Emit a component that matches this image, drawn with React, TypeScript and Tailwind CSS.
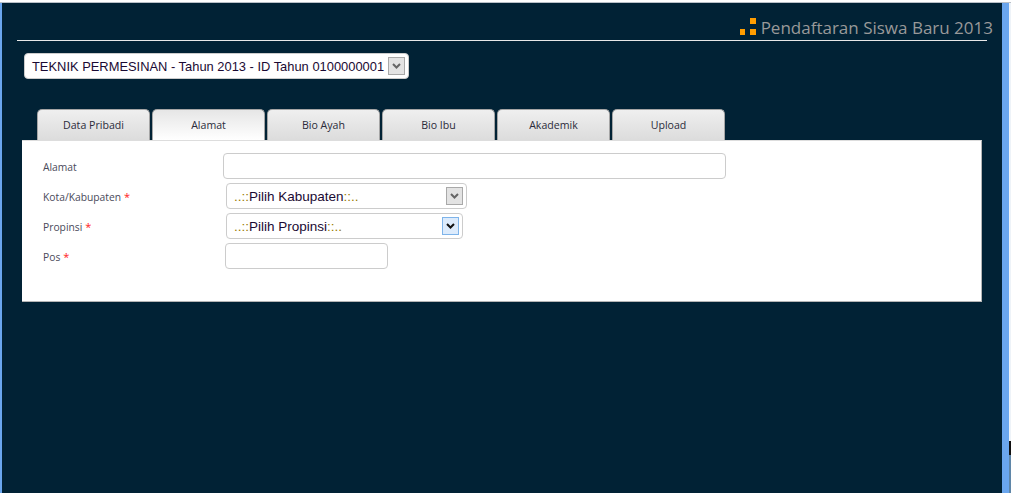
import React from 'react';

const tabs = ['Data Pribadi', 'Alamat', 'Bio Ayah', 'Bio Ibu', 'Akademik', 'Upload'];

const Arrow: React.FC<{ dark?: boolean }> = ({ dark }) => (
  <svg width="9" height="6" viewBox="0 0 9 6" fill="none">
    <path d="M1 1 L4.5 4.5 L8 1" stroke={dark ? '#111111' : '#666666'} strokeWidth="2" />
  </svg>
);

const SelectBox: React.FC<{ label: React.ReactNode; width: string; active?: boolean }> = ({ label, width, active }) => (
  <div className={`${width} h-[26px] flex items-center justify-between pl-[7px] pr-[3px] bg-white border border-[#cccccc] rounded-[4px] text-[13.5px] text-[#1a0a33]`}>
    <span className="whitespace-nowrap pt-[2px]">{label}</span>
    <span className={`w-[17px] h-[18px] flex items-center justify-center border ${active ? 'border-[#7eb4ea] bg-[#dcebfc]' : 'border-[#a9a9a9] bg-[#e3e3e3]'}`}>
      <Arrow dark={active} />
    </span>
  </div>
);

const Row: React.FC<{ label: string; required?: boolean; children: React.ReactNode }> = ({ label, required, children }) => (
  <div className="flex items-center h-[26px]">
    <div className={`w-[201px] pl-[21px] ${required ? 'pt-[2px]' : 'pt-[4px]'} text-[10.3px] text-[#4a4a5a] font-['Open_Sans','Noto_Sans',sans-serif]`}>
      {label}
      {required && <span className="text-[#ff2020] text-[11px]"> *</span>}
    </div>
    {children}
  </div>
);

const App: React.FC = () => {
  return (
    <div className="w-[1011px] h-[493px] overflow-hidden flex flex-col bg-white font-['Liberation_Sans',sans-serif]">
      <div className="h-[2px] bg-white" />
      <div className="h-[1px] bg-[#b9c0c8]" />
      <div className="flex flex-1">
        <div className="w-[2px] bg-[#6aa6ee]" />
        <div className="w-[1000px] bg-[#012235] pl-[15px] pr-[15px]">
          {/* Header */}
          <div className="h-[37px] w-[976px] flex items-end justify-end gap-[5px]">
            <svg width="16" height="17" viewBox="0 0 16 17" className="mb-[5px]">
              <rect x="0" y="11" width="5" height="6" fill="#ff9d00" />
              <rect x="10" y="0" width="6" height="6" fill="#ff9d00" />
              <rect x="10" y="11" width="6" height="6" fill="#ff9d00" />
            </svg>
            <span className="text-[#999999] text-[17px] leading-[24px] whitespace-nowrap font-['Open_Sans',sans-serif]">Pendaftaran Siswa Baru 2013</span>
          </div>
          <div className="h-[1px] w-[970px] bg-[#e8e8e8]" />

          <div className="mt-[12px] ml-[7px] w-[385px] h-[26px] flex items-center justify-between pl-[7px] pr-[3px] bg-white border border-[#cccccc] rounded-[4px] text-[12.9px] text-[#1a0a33]">
            <span className="whitespace-nowrap pt-[1px]">TEKNIK PERMESINAN - Tahun 2013 - ID Tahun 0100000001</span>
            <span className="w-[17px] h-[18px] shrink-0 flex items-center justify-center border border-[#a9a9a9] bg-[#e3e3e3]">
              <Arrow />
            </span>
          </div>

          {/* Tabs */}
          <div className="mt-[30px] ml-[20px] flex gap-[2px] h-[31px]">
            {tabs.map(tab => (
              <div
                key={tab}
                className={`w-[113px] h-[31px] flex items-center justify-center pt-[2px] rounded-t-[5px] border-t border-x border-[#a5a5a5] text-[10.6px] text-[#2b2b3a] font-['Open_Sans','Noto_Sans',sans-serif] ${
                  tab === 'Alamat' ? 'bg-gradient-to-b from-[#e6e6e6] to-white' : 'bg-gradient-to-b from-[#efefef] to-[#dcdcdc]'
                }`}
              >
                {tab}
              </div>
            ))}
          </div>

          {/* Panel */}
          <div className="ml-[5px] w-[960px] h-[162px] bg-white border-t border-t-[#dddddd] border-r border-r-[#b5b5b5] border-b border-b-[#b5b5b5] pt-[12px] flex flex-col gap-[4px]">
            <Row label="Alamat">
              <div className="w-[503px] h-[26px] bg-white border border-[#cccccc] rounded-[4px]" />
            </Row>
            <Row label="Kota/Kabupaten" required>
              <div className="ml-[3px]">
                <SelectBox width="w-[241px]" label={<><span className="text-[#9a7c00]">..::</span>Pilih Kabupaten<span className="text-[#9a7c00]">::..</span></>} />
              </div>
            </Row>
            <Row label="Propinsi" required>
              <div className="ml-[3px]">
                <SelectBox active width="w-[237px]" label={<><span className="text-[#9a7c00]">..::</span>Pilih Propinsi<span className="text-[#9a7c00]">::..</span></>} />
              </div>
            </Row>
            <Row label="Pos" required>
              <div className="ml-[2px] w-[163px] h-[26px] bg-white border border-[#cccccc] rounded-[4px]" />
            </Row>
          </div>
        </div>
        <div className="w-[7px] bg-[#6aa6ee]" />
        <div className="w-[2px] flex flex-col bg-[#eef3f8]">
          <div className="flex-1" />
          <div className="h-[14px] bg-[#111111]" />
          <div className="h-[38px] bg-[#5f86a8]" />
        </div>
      </div>
    </div>
  );
};

export default App;
